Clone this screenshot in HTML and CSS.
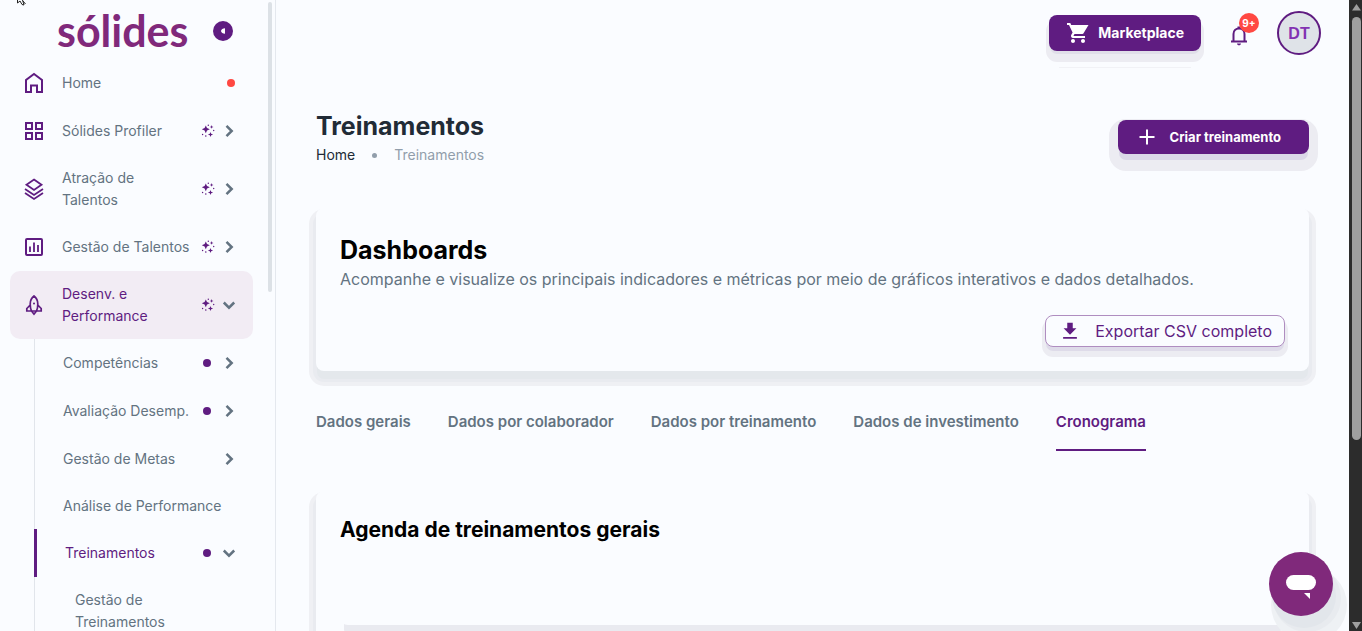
FILE: index.html
```html
<!DOCTYPE html>
<html lang="pt-BR">
<head>
<meta charset="utf-8">
<meta name="viewport" content="width=device-width, initial-scale=1">
<title>Treinamentos</title>
<link rel="stylesheet" href="styles.css">
</head>
<body>
<svg class="defs" aria-hidden="true">
  <symbol id="right" viewBox="0 0 24 24"><path d="M9.500 6.800l5.200 5.200-5.200 5.200" fill="none" stroke="currentColor" stroke-width="2.500"/></symbol>
  <symbol id="down" viewBox="0 0 24 24"><path d="M6.800 9.500l5.200 5.200 5.200-5.200" fill="none" stroke="currentColor" stroke-width="2.500"/></symbol>
  <symbol id="sparkle" viewBox="0 0 14 14"><path d="M4.800 1.500l1.200 2.600 2.800 1.200-2.800 1.200-1.200 2.800-1.200-2.800-2.800-1.200 2.800-1.200zM10.600 1l.5 1.400 1.400.5-1.400.5-.5 1.400-.5-1.400-1.400-.5 1.400-.5zM9.500 8l.7 1.800 1.900.7-1.900.7-.7 1.900-.7-1.900-1.900-.7 1.900-.7z"/><circle cx="7.300" cy="1.200" r=".7"/><circle cx="12.700" cy="6.500" r=".7"/><circle cx="1.600" cy="10.500" r=".7"/><circle cx="4.800" cy="12" r=".8"/></symbol>
</svg>
<div class="app">
  <aside class="sidebar">
    <header class="brand">
      <a class="logo" href="#">sólides</a>
      <button class="collapse" type="button" aria-label="Recolher menu"><svg viewBox="0 0 20 20"><path d="M12 7.300v5.400c-2 0-4-1.200-4-2.700s2-2.700 4-2.700z"/></svg></button>
    </header>
    <nav class="menu" aria-label="Menu principal">
      <a class="item" href="#">
        <svg class="icon" viewBox="0 0 24 24"><path d="M4 21V9l8-6 8 6v12h-5v-6.500H9V21z" fill="none" stroke="currentColor" stroke-width="2"/></svg>
        <span class="label">Home</span><span class="mark"><i class="dot alert"></i></span>
      </a>
      <a class="item" href="#">
        <svg class="icon" viewBox="0 0 24 24"><path d="M4 4h6v6H4zM14 4h6v6h-6zM4 14h6v6H4zM14 14h6v6h-6z" fill="none" stroke="currentColor" stroke-width="2"/></svg>
        <span class="label">Sólides Profiler</span><svg class="sparkle"><use href="#sparkle"/></svg><svg class="chevron"><use href="#right"/></svg>
      </a>
      <a class="item" href="#">
        <svg class="icon" viewBox="0 0 24 24"><path d="M12 2.500l7.500 5.200-7.500 5.200-7.500-5.200zM3 12l9 6 9-6M3 16l9 6 9-6" fill="none" stroke="currentColor" stroke-width="1.800"/></svg>
        <span class="label">Atração de Talentos</span><svg class="sparkle"><use href="#sparkle"/></svg><svg class="chevron"><use href="#right"/></svg>
      </a>
      <a class="item" href="#">
        <svg class="icon" viewBox="0 0 24 24"><rect x="4" y="4" width="16" height="16" rx="1" fill="none" stroke="currentColor" stroke-width="2"/><path d="M8 11.500V17M12 7.500V17M16 10v7" stroke="currentColor" stroke-width="1.800"/></svg>
        <span class="label">Gestão de Talentos</span><svg class="sparkle"><use href="#sparkle"/></svg><svg class="chevron"><use href="#right"/></svg>
      </a>
      <a class="item current" href="#">
        <svg class="icon" viewBox="0 0 24 24"><path d="M12 3c-2.600 2-3.800 5-3.800 8 0 3 .4 5 1.300 7h5c.9-2 1.300-4 1.300-7 0-3-1.200-6-3.800-8zM8.200 12L4.800 15.500V18h14.400v-2.500L15.800 12M9.500 18l2.500 3.200 2.500-3.200" fill="none" stroke="currentColor" stroke-width="1.700"/><circle cx="12" cy="10.500" r="1"/></svg>
        <span class="label">Desenv. e Performance</span><svg class="sparkle"><use href="#sparkle"/></svg><svg class="chevron"><use href="#down"/></svg>
      </a>
      <div class="submenu">
        <a class="item" href="#"><span class="label">Competências</span><i class="dot"></i><svg class="chevron"><use href="#right"/></svg></a>
        <a class="item" href="#"><span class="label">Avaliação Desemp.</span><i class="dot"></i><svg class="chevron"><use href="#right"/></svg></a>
        <a class="item" href="#"><span class="label">Gestão de Metas</span><svg class="chevron"><use href="#right"/></svg></a>
        <a class="item" href="#"><span class="label">Análise de Performance</span></a>
        <a class="item open" href="#"><span class="label">Treinamentos</span><i class="dot"></i><svg class="chevron"><use href="#down"/></svg></a>
        <a class="item leaf" href="#"><span class="label">Gestão de Treinamentos</span></a>
      </div>
    </nav>
    <div class="menu-thumb"></div>
  </aside>

  <div class="page">
    <header class="topbar">
      <button class="button market" type="button"><svg viewBox="0 0 24 24"><path d="M7 18c-1.100 0-2 .9-2 2s.9 2 2 2 2-.9 2-2-.9-2-2-2zM1 2v2h2l3.600 7.600-1.400 2.400c-.7 1.300.3 3 1.800 3h12v-2H7.400l1.100-2h7.500c.7 0 1.400-.4 1.700-1L22.500 4H5.200l-.9-2zM17 18c-1.100 0-2 .9-2 2s.9 2 2 2 2-.9 2-2-.9-2-2-2z"/></svg>Marketplace</button>
      <button class="bell" type="button" aria-label="Notificações"><svg viewBox="0 0 24 24"><path d="M4 18.500h16M6.500 18v-7c0-3.200 2.300-5.500 5.500-5.500s5.500 2.300 5.500 5.500v7" fill="none" stroke="currentColor" stroke-width="2"/><path d="M10.500 5V3.500h3V5zM10 20.500h4c0 1-.9 1.800-2 1.800s-2-.8-2-1.800z"/></svg><span class="badge">9+</span></button>
      <button class="avatar" type="button">DT</button>
    </header>

    <main class="content">
      <section class="heading">
        <div>
          <h1>Treinamentos</h1>
          <nav class="crumbs" aria-label="Caminho"><a href="#">Home</a><i></i><span>Treinamentos</span></nav>
        </div>
        <button class="button create" type="button"><svg viewBox="0 0 24 24"><path d="M12 4.500v15M4.500 12h15" stroke="currentColor" stroke-width="2"/></svg>Criar treinamento</button>
      </section>

      <section class="card">
        <h2>Dashboards</h2>
        <p>Acompanhe e visualize os principais indicadores e métricas por meio de gráficos interativos e dados detalhados.</p>
        <button class="export" type="button"><svg viewBox="0 0 24 24"><path d="M9 3h6v6h4l-7 7-7-7h4zM4.500 18.500h15v2h-15z"/></svg>Exportar CSV completo</button>
      </section>

      <nav class="tabs" aria-label="Seções">
        <a href="#">Dados gerais</a>
        <a href="#">Dados por colaborador</a>
        <a href="#">Dados por treinamento</a>
        <a href="#">Dados de investimento</a>
        <a class="active" href="#" aria-current="page">Cronograma</a>
      </nav>

      <section class="card agenda">
        <h2>Agenda de treinamentos gerais</h2>
        <div class="filters"></div>
      </section>
    </main>
  </div>

  <div class="scrollbar" aria-hidden="true">
    <svg viewBox="0 0 13 16"><path d="M7.500 4L12 10.500H3z"/></svg>
    <div class="track"><div class="thumb"></div></div>
    <svg viewBox="0 0 13 10"><path d="M7.500 8L3 1h9z"/></svg>
  </div>
</div>
<button class="chat" type="button" aria-label="Abrir chat"><svg viewBox="0 0 64 64"><rect x="17" y="23" width="30" height="15" rx="7.500"/><path d="M35 41h6v6z"/></svg></button>
<svg class="pointer" viewBox="0 0 14 6" aria-hidden="true"><path d="M1.500 0v3l2.500-2 2 3.500 2 .5L6.500 0M7 1l2.500 3" fill="none" stroke="#222" stroke-width="1"/></svg>
</body>
</html>
```
FILE: styles.css
```css
* { box-sizing: border-box; }

:root {
  --bg: #fafcff;
  --purple: #5f1c81;
  --plum: #80297b;
  --gray: #637381;
  --red: #ff4842;
}

body {
  margin: 0;
  background: var(--bg);
  color: #212b36;
  font-family: Inter, "Open Sans", sans-serif;
  font-size: 14px;
  line-height: 22px;
  overflow: hidden;
}

a { color: inherit; text-decoration: none; }
button { margin: 0; padding: 0; border: 0; font: inherit; cursor: pointer; }
svg { display: block; fill: currentColor; flex: none; }
h1, h2, p { margin: 0; }
.defs { position: absolute; width: 0; height: 0; }

.app { display: grid; grid-template-columns: 276px minmax(0, 1fr) 13px; grid-template-rows: 100vh; height: 100vh; overflow: hidden; }

/* Sidebar */
.sidebar { position: relative; border-right: 1px solid #e4e8ee; overflow: hidden; color: var(--gray); }
.brand { display: flex; align-items: center; justify-content: space-between; height: 59px; padding: 0 42px 0 57px; }
.logo { color: var(--plum); font-family: Lato, sans-serif; font-size: 43px; font-weight: 700; line-height: 59px; padding-top: 2px; }
.collapse { width: 20px; height: 20px; margin-top: 2px; border-radius: 50%; background: var(--purple); color: #fff; }
.menu { padding: 0 22px 0 10px; }
.item { display: flex; align-items: center; min-height: 46px; padding: 12px; border-radius: 10px; }
.item:has(.chevron), .item:has(.icon) { padding-block: 11px; min-height: 48px; }
.icon { width: 24px; height: 24px; margin-right: 16px; color: var(--purple); }
.label { flex: 1; }
.menu > .item:has(.sparkle) .label { max-width: 130px; }
.menu > .item:has(.sparkle) { padding-block: 12px; }
.item.current { background: #f2ecf4; color: var(--purple); }
.current .chevron, .open .chevron { color: var(--gray); }
.sparkle { width: 14px; height: 14px; margin-left: auto; color: var(--purple); }
.chevron { width: 24px; height: 24px; margin-left: 2px; }
.dot { width: 8px; height: 8px; margin-right: 4px; border-radius: 50%; background: var(--purple); }
.dot.alert { display: block; margin: 0 6px; background: var(--red); }
.submenu { margin-left: 24px; border-left: 1px solid #e1e5eb; }
.submenu .item { padding-left: 28px; border-radius: 0; }
.submenu .open { margin-left: -1px; border-left: 3px solid var(--purple); color: var(--purple); }
.submenu .leaf { padding-left: 40px; padding-right: 60px; }
.menu-thumb { position: absolute; top: 2px; right: 3px; width: 4px; height: 46vh; border-radius: 2px; background: #dce1e6; }

/* Top bar */
.page { overflow: hidden; }
.topbar { display: flex; align-items: center; justify-content: flex-end; height: 66px; padding-right: 28px; }
.button { position: relative; display: flex; align-items: center; border-radius: 8px; background: var(--purple); color: #fff; font-weight: 700; }
.market { height: 36px; padding: 0 17px; gap: 8px; box-shadow: 0 4px 0 -1px #e0dfe9, 0 8px 0 3px #ececf2; }
.market::after { content: ""; position: absolute; left: 10px; right: 10px; top: 52px; height: 1px; background: #f1f2f6; }
.market svg { width: 24px; height: 24px; }
.bell { position: relative; width: 24px; height: 24px; margin: 4px 26px 0; background: none; color: var(--purple); }
.bell svg { width: 24px; height: 24px; }
.badge { position: absolute; left: 12px; top: -10px; width: 20px; height: 20px; border-radius: 50%; background: var(--red); color: #fff; font-size: 10px; font-weight: 700; line-height: 20px; text-align: center; }
.avatar { width: 44px; height: 44px; padding-top: 2px; border: 2px solid var(--purple); border-radius: 50%; background: #dfe3e8; color: #8232b2; font-family: "Liberation Sans", sans-serif; font-size: 16px; font-weight: 700; }

/* Content */
.content { padding: 42px 40px 0; }
.heading { display: flex; justify-content: space-between; align-items: flex-start; height: 100px; }
h1 { font-size: 25px; line-height: 36px; font-weight: 700; }
.crumbs { display: flex; align-items: center; }
.crumbs i { width: 5px; height: 5px; margin: 0 17px; border-radius: 50%; background: #919eab; }
.crumbs span { color: #919eab; }
.create { height: 34px; margin-top: 12px; padding: 0 28px 0 17px; gap: 11px; font-size: 13px; box-shadow: 0 7px 0 -1px #dbd8e8, 0 8px 0 9px #ececf2; }
.create svg { width: 24px; height: 24px; }

.card {
  display: flex;
  flex-direction: column;
  padding: 24px;
  border-radius: 8px;
  background: var(--bg);
  box-shadow: 0 9px 0 -1px #e4e8ec, 0 8px 0 3px #e9ebf0, 0 8px 0 7px #eff0f4;
}
.card h2 { color: #000; font-size: 25px; line-height: 36px; font-weight: 700; }
.card p { color: var(--gray); font-size: 16px; line-height: 22px; }
.export {
  display: flex;
  align-items: center;
  align-self: flex-end;
  gap: 14px;
  height: 32px;
  margin-top: 25px;
  padding: 0 12px 0 13px;
  border: 1px solid #af8dc0;
  border-radius: 8px;
  background: var(--bg);
  color: var(--purple);
  font-size: 16px;
  box-shadow: 0 5px 0 -1px #dedbe9, 0 7px 0 3px #ececf2;
}
.export svg { width: 22px; height: 22px; }

.tabs { display: flex; gap: 37px; padding-top: 22px; color: var(--gray); font-size: 15px; font-weight: 600; }
.tabs a { padding: 18px 0 16px; border-bottom: 2px solid transparent; }
.tabs .active { color: var(--purple); border-color: var(--purple); }

.agenda { margin-top: 40px; height: 300px; }
.card.agenda h2 { font-size: 21px; line-height: 30px; }
.filters { height: 80px; border-radius: 8px; box-shadow: 0 12px 0 -4px #e9eaf0; }

/* Window scrollbar */
.scrollbar { display: flex; flex-direction: column; background: #2c2c2c; color: #9f9f9f; }
.track { flex: 1; padding: 1px 1px 0 3px; }
.thumb { height: 70%; border-radius: 5px; background: #9f9f9f; }

/* Floating elements */
.chat { position: fixed; right: 29px; bottom: 15px; width: 64px; height: 64px; border-radius: 50%; background: var(--plum); color: #fff; box-shadow: 3px 12px 0 0 #e2e6eb, 6px 14px 0 2px #e8ebef, 8px 21px 0 6px #eef1f4; }
.pointer { position: fixed; left: 16px; top: 0; width: 14px; height: 6px; }
```
